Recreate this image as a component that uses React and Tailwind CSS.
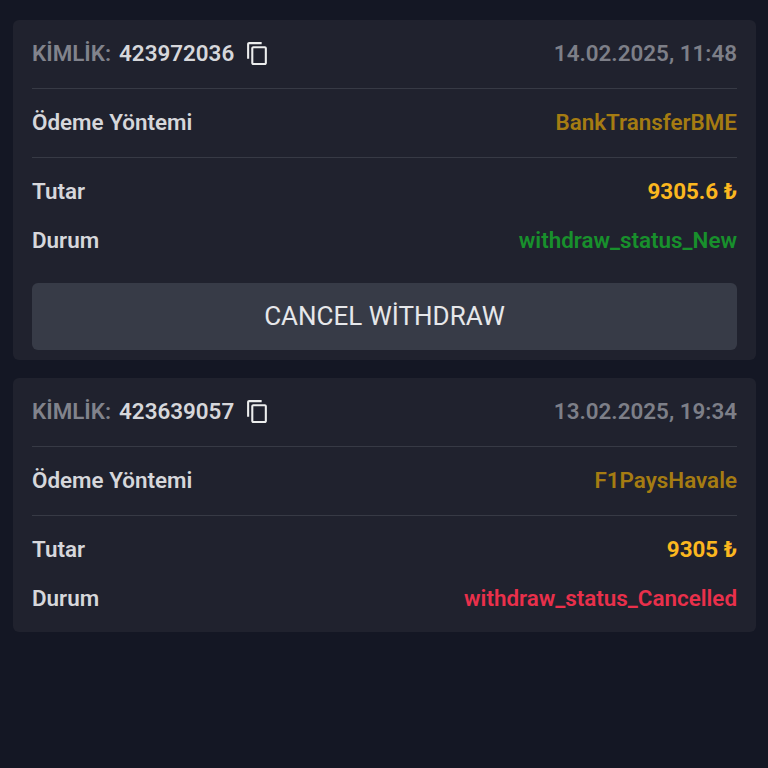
function CopyIcon() {
  return (
    <svg viewBox="0 0 24 24" className="w-[25px] h-[25px] fill-[#eceded] shrink-0">
      <path d="M16 1H4c-1.1 0-2 .9-2 2v14h2V3h12V1zm3 4H8c-1.1 0-2 .9-2 2v14c0 1.1.9 2 2 2h11c1.1 0 2-.9 2-2V7c0-1.1-.9-2-2-2zm0 16H8V7h11v14z" />
    </svg>
  );
}

function WithdrawCard({ id, date, method, amount, status, statusColor, cancelable }) {
  return (
    <div className="bg-[#20222e] rounded-md px-[19px] pb-[10px]">
      <div className="h-[69px] pb-px flex items-center justify-between border-b border-[#373a45]">
        <div className="flex items-center font-semibold">
          <span className="text-[#81838c]">KİMLİK:</span>
          <span className="ml-2 text-[#d6d7db]">{id}</span>
          <span className="ml-[11px] mt-px flex"><CopyIcon /></span>
        </div>
        <span className="font-semibold text-[#7d7f88]">{date}</span>
      </div>
      <div className="h-[69px] pb-px flex items-center justify-between border-b border-[#373a45] font-semibold">
        <span className="text-[#d6d7db]">Ödeme Yöntemi</span>
        <span className="text-[#a57c12]">{method}</span>
      </div>
      <div className="pt-[9px]">
        <div className="h-[49px] flex items-center justify-between font-semibold">
          <span className="text-[#d6d7db]">Tutar</span>
          <span className="font-bold text-[#fbb71f]">{amount} ₺</span>
        </div>
        <div className="h-[48px] pt-[2px] flex items-center justify-between font-semibold">
          <span className="text-[#d6d7db]">Durum</span>
          <span className={statusColor}>{status}</span>
        </div>
      </div>
      {cancelable && (
        <button className="mt-[19px] w-full h-[67px] rounded-md bg-[#373b47] text-[#e6e7ea] text-[26px]">
          CANCEL WİTHDRAW
        </button>
      )}
    </div>
  );
}

export default function App() {
  return (
    <div className="w-[768px] h-[768px] overflow-hidden bg-[#141724] pt-[20px] pl-[13px] pr-[12px] flex flex-col gap-[18px] text-[22.4px] font-['Roboto',sans-serif]">
      <WithdrawCard
        id="423972036"
        date="14.02.2025, 11:48"
        method="BankTransferBME"
        amount="9305.6"
        status="withdraw_status_New"
        statusColor="text-[#18902c]"
        cancelable
      />
      <WithdrawCard
        id="423639057"
        date="13.02.2025, 19:34"
        method="F1PaysHavale"
        amount="9305"
        status="withdraw_status_Cancelled"
        statusColor="text-[#e9304b]"
      />
    </div>
  );
}
